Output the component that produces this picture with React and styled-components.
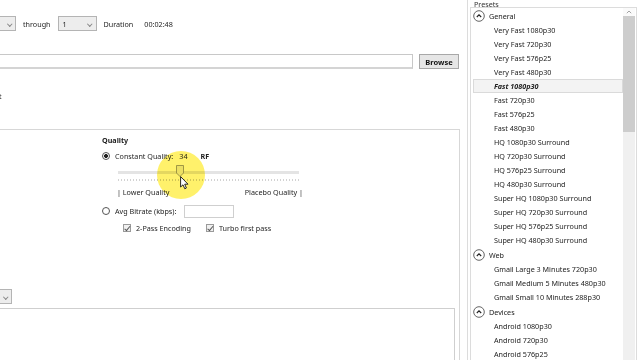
import React from "react";
import styled, { createGlobalStyle } from "styled-components";

const GlobalStyle = createGlobalStyle`
  html, body {
    margin: 0;
    padding: 0;
    background: #ffffff;
  }
  body {
    font-family: "Noto Sans", "Open Sans", sans-serif;
    font-size: 7.2px;
    color: #1e1e1e;
  }
`;

const generalPresets = [
    "Very Fast 1080p30",
    "Very Fast 720p30",
    "Very Fast 576p25",
    "Very Fast 480p30",
    "Fast 1080p30",
    "Fast 720p30",
    "Fast 576p25",
    "Fast 480p30",
    "HQ 1080p30 Surround",
    "HQ 720p30 Surround",
    "HQ 576p25 Surround",
    "HQ 480p30 Surround",
    "Super HQ 1080p30 Surround",
    "Super HQ 720p30 Surround",
    "Super HQ 576p25 Surround",
    "Super HQ 480p30 Surround",
];

const webPresets = [
    "Gmail Large 3 Minutes 720p30",
    "Gmail Medium 5 Minutes 480p30",
    "Gmail Small 10 Minutes 288p30",
];

const devicePresets = ["Android 1080p30", "Android 720p30", "Android 576p25"];

const Chevron = () => (
    <svg width="12" height="12" viewBox="0 0 12 12">
        <circle cx="6" cy="6" r="5.3" fill="#fff" stroke="#555" strokeWidth="0.9"/>
        <path d="M3.8 7 L6 4.8 L8.2 7" fill="none" stroke="#222" strokeWidth="1.1"/>
    </svg>
);

const PresetGroup = ({title, items, selected}) => (
    <>
        <GroupHeader>
            <Chevron/>
            <span>{title}</span>
        </GroupHeader>
        {items.map((name) => (
            <PresetItem key={name} $selected={name === selected}>{name}</PresetItem>
        ))}
    </>
);

const App = () => {
    return (
        <Screen>
            <GlobalStyle/>
            <Main>
                <TopRow>
                    <Select $width={16} $cut/>
                    <Label>through</Label>
                    <Select $width={39}>1</Select>
                    <Label>Duration</Label>
                    <Value>00:02:48</Value>
                </TopRow>
                <PathRow>
                    <PathInput/>
                    <BrowseButton>Browse</BrowseButton>
                </PathRow>
                <CutText>t</CutText>
                <TabPanel>
                    <QualitySection>
                        <SectionTitle>Quality</SectionTitle>
                        <OptionRow>
                            <Radio $checked/>
                            <span>Constant Quality:</span>
                            <QualityValue>34</QualityValue>
                            <strong>RF</strong>
                        </OptionRow>
                        <SliderArea>
                            <Track/>
                            <Ticks/>
                            <Thumb>
                                <svg width="8" height="12" viewBox="0 0 8 12">
                                    <path d="M0.5 0.5 H7.5 V8 L4 11.5 L0.5 8 Z" fill="#ececec" stroke="#8a8a8a" strokeWidth="0.8"/>
                                </svg>
                            </Thumb>
                            <Highlight/>
                            <Cursor>
                                <svg width="10" height="14" viewBox="0 0 10 14">
                                    <path d="M0.6 0.6 L0.6 11 L3 8.8 L4.8 12.8 L6.4 12 L4.7 8.2 L8 8.2 Z" fill="#fff" stroke="#111" strokeWidth="0.9" strokeLinejoin="round"/>
                                </svg>
                            </Cursor>
                        </SliderArea>
                        <ScaleRow>
                            <span>| Lower Quality</span>
                            <span>Placebo Quality |</span>
                        </ScaleRow>
                        <OptionRow $gap={8}>
                            <Radio/>
                            <span>Avg Bitrate (kbps):</span>
                            <BitrateInput/>
                        </OptionRow>
                        <CheckRow>
                            <Check/>
                            <span>2-Pass Encoding</span>
                            <Check $gap/>
                            <span>Turbo first pass</span>
                        </CheckRow>
                    </QualitySection>
                    <LowerArea>
                        <Select $width={12} $cut/>
                        <InnerBox/>
                    </LowerArea>
                </TabPanel>
            </Main>
            <Divider/>
            <Presets>
                <PresetsLabel>Presets</PresetsLabel>
                <PresetBox>
                    <PresetList>
                        <PresetGroup title="General" items={generalPresets} selected="Fast 1080p30"/>
                        <PresetGroup title="Web" items={webPresets}/>
                        <PresetGroup title="Devices" items={devicePresets}/>
                    </PresetList>
                    <ScrollBar>
                        <ScrollArrow>
                            <svg width="6" height="4" viewBox="0 0 6 4">
                                <path d="M0.8 3.2 L3 1 L5.2 3.2" fill="none" stroke="#9a9a9a" strokeWidth="0.9"/>
                            </svg>
                        </ScrollArrow>
                        <ScrollThumb/>
                    </ScrollBar>
                </PresetBox>
            </Presets>
        </Screen>
    );
};

export default App;

const Screen = styled.div`
    display: flex;
    width: 640px;
    height: 360px;
    overflow: hidden;
    background: #fff;
`;

const Main = styled.div`
    width: 467px;
    display: flex;
    flex-direction: column;
`;

const TopRow = styled.div`
    display: flex;
    align-items: center;
    height: 15px;
    margin-top: 16px;
`;

const Select = styled.div`
    box-sizing: border-box;
    width: ${(p) => p.$width}px;
    height: 15px;
    flex-shrink: 0;
    border: 1px solid #b4b4b4;
    border-left: ${(p) => (p.$cut ? "none" : "1px solid #b4b4b4")};
    background: #ededed;
    display: flex;
    align-items: center;
    padding-left: 4px;
    position: relative;
    color: #222;

    &::after {
        content: "";
        position: absolute;
        right: 4px;
        top: 5px;
        width: 2.5px;
        height: 2.5px;
        border-right: 0.8px solid #888;
        border-bottom: 0.8px solid #888;
        transform: rotate(45deg);
    }
`;

const Label = styled.span`
    margin: 0 7px 0 7px;
`;

const Value = styled.span`
    margin-left: 4px;
`;

const PathRow = styled.div`
    display: flex;
    width: 459px;
    height: 15px;
    margin-top: 23px;
    gap: 6px;
`;

const PathInput = styled.div`
    flex: 1;
    box-sizing: border-box;
    border: 1px solid #c8c8c8;
    border-left: none;
    border-bottom: 2px solid #d4d4d4;
    background: #fff;
`;

const BrowseButton = styled.div`
    box-sizing: border-box;
    width: 40px;
    border: 1px solid #a8a8a8;
    background: #e6e6e6;
    font-weight: 700;
    font-size: 7.5px;
    display: flex;
    align-items: center;
    justify-content: center;
    color: #111;
`;

const CutText = styled.div`
    margin-top: 22px;
    margin-left: -1px;
    height: 10px;
`;

const TabPanel = styled.div`
    box-sizing: border-box;
    width: 460px;
    flex: 1;
    margin-top: 28px;
    border-top: 1px solid #d7d7d7;
    border-right: 1px solid #d7d7d7;
    display: flex;
    flex-direction: column;
`;

const QualitySection = styled.div`
    padding: 5px 0 0 102px;
    display: flex;
    flex-direction: column;
`;

const SectionTitle = styled.div`
    font-weight: 700;
    height: 11px;
    line-height: 11px;
`;

const OptionRow = styled.div`
    display: flex;
    align-items: center;
    height: 12px;
    margin-top: ${(p) => p.$gap ?? 4}px;

    strong {
        font-weight: 700;
    }
`;

const Radio = styled.span`
    box-sizing: border-box;
    width: 8px;
    height: 8px;
    border-radius: 50%;
    border: 0.9px solid #555;
    margin-right: 5px;
    background: ${(p) => (p.$checked ? "radial-gradient(circle, #222 0 1.8px, #fff 2.2px)" : "#fff")};
`;

const QualityValue = styled.span`
    margin: 0 13px 0 6px;
`;

const SliderArea = styled.div`
    position: relative;
    height: 16px;
    margin: 5px 0 0 16px;
    width: 181px;
`;

const Track = styled.div`
    position: absolute;
    left: 0;
    right: 0;
    top: 4px;
    height: 3px;
    background: #e4e4e4;
`;

const Ticks = styled.div`
    position: absolute;
    left: 0;
    right: 0;
    top: 12px;
    height: 2px;
    background-image: repeating-linear-gradient(90deg, #d2d2d2 0 1px, transparent 1px 3px);
`;

const Thumb = styled.div`
    position: absolute;
    left: 58px;
    top: -2px;
    line-height: 0;
`;

const Highlight = styled.div`
    position: absolute;
    left: 39px;
    top: -16px;
    width: 48px;
    height: 48px;
    border-radius: 50%;
    background: rgba(255, 238, 70, 0.8);
    mix-blend-mode: multiply;
`;

const Cursor = styled.div`
    position: absolute;
    left: 62px;
    top: 9px;
    line-height: 0;
`;

const ScaleRow = styled.div`
    display: flex;
    justify-content: space-between;
    width: 186px;
    margin-left: 15px;
    height: 10px;
    line-height: 10px;
    margin-top: 4px;
`;

const BitrateInput = styled.div`
    box-sizing: border-box;
    width: 50px;
    height: 13px;
    border: 1px solid #cfcfcf;
    margin-left: 8px;
`;

const CheckRow = styled.div`
    display: flex;
    align-items: center;
    height: 10px;
    margin: 6px 0 0 21px;
`;

const Check = styled.span`
    box-sizing: border-box;
    width: 8px;
    height: 8px;
    border: 0.8px solid #9a9a9a;
    background: #f0f0f0;
    margin: 0 5px 0 ${(p) => (p.$gap ? "15px" : "0")};
    position: relative;

    &::after {
        content: "";
        position: absolute;
        left: 2.2px;
        top: 0.3px;
        width: 2px;
        height: 4.5px;
        border-right: 1px solid #555;
        border-bottom: 1px solid #555;
        transform: rotate(40deg);
    }
`;

const LowerArea = styled.div`
    margin-top: 56px;
    display: flex;
    flex-direction: column;
    flex: 1;
    gap: 4px;
`;

const InnerBox = styled.div`
    box-sizing: border-box;
    width: 455px;
    flex: 1;
    border-top: 1px solid #cfcfcf;
    border-right: 1px solid #cfcfcf;
`;

const Divider = styled.div`
    width: 2px;
    border-left: 1px solid #dcdcdc;
`;

const Presets = styled.div`
    flex: 1;
    display: flex;
    flex-direction: column;
    padding-right: 3px;
`;

const PresetsLabel = styled.div`
    height: 7px;
    line-height: 8px;
    padding-left: 4px;
    color: #333;
`;

const PresetBox = styled.div`
    flex: 1;
    display: flex;
    border: 1px solid #dcdcdc;
    border-bottom: none;
    padding: 0 1px 0 2px;
`;

const PresetList = styled.div`
    flex: 1;
    display: flex;
    flex-direction: column;
`;

const GroupHeader = styled.div`
    display: flex;
    align-items: center;
    gap: 4px;
    height: 15px;
    color: #222;
    flex-shrink: 0;
`;

const PresetItem = styled.div`
    box-sizing: border-box;
    height: 14px;
    line-height: 12px;
    flex-shrink: 0;
    padding-left: 20px;
    border: 1px solid ${(p) => (p.$selected ? "#dadada" : "transparent")};
    background: ${(p) => (p.$selected ? "#f3f3f3" : "transparent")};
    font-weight: ${(p) => (p.$selected ? 700 : 400)};
    font-style: ${(p) => (p.$selected ? "italic" : "normal")};
    color: #222;
`;

const ScrollBar = styled.div`
    width: 12px;
    display: flex;
    flex-direction: column;
    background: #f0f0f0;
`;

const ScrollArrow = styled.div`
    height: 8px;
    display: flex;
    align-items: center;
    justify-content: center;
    background: #fafafa;
`;

const ScrollThumb = styled.div`
    height: 116px;
    background: #cdcdcd;
`;
